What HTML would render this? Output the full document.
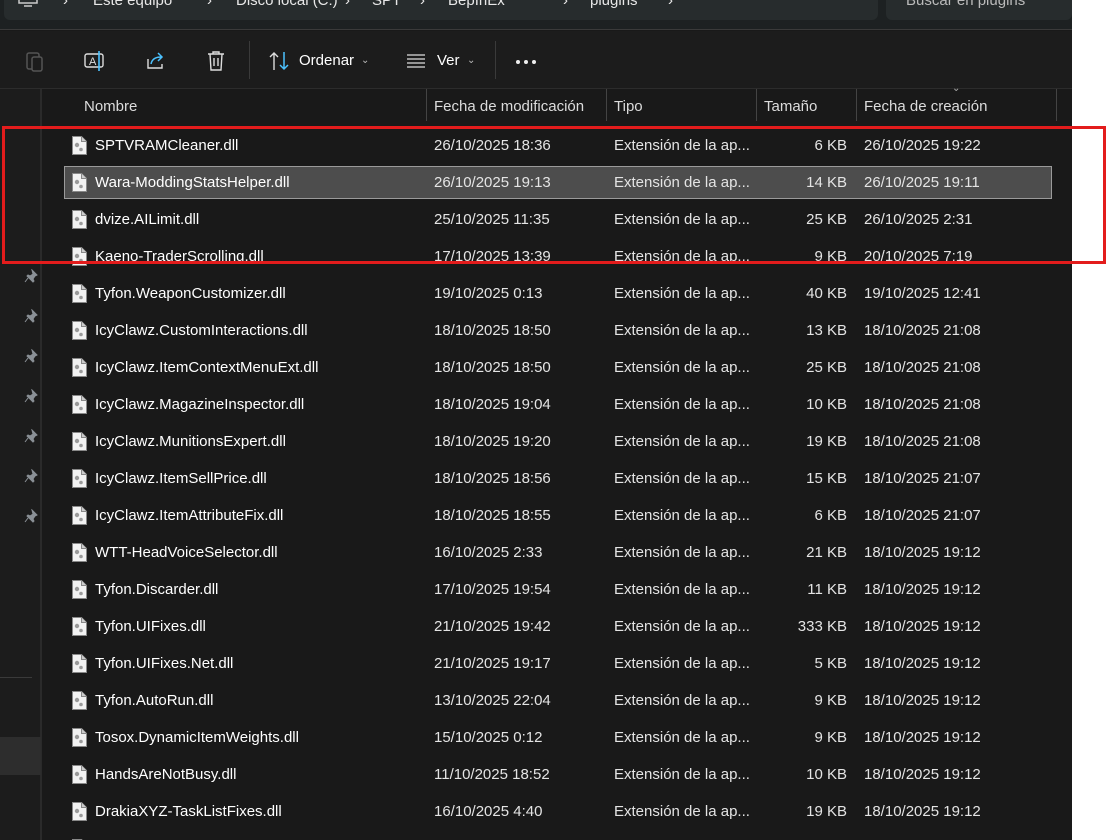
<!DOCTYPE html>
<html><head><meta charset="utf-8"><style>
*{margin:0;padding:0;box-sizing:border-box}
body{width:1108px;height:840px;overflow:hidden;background:#fff;font-family:"Liberation Sans",sans-serif;color:#fff;position:relative}
#app{position:absolute;left:0;top:0;width:1072px;height:840px;background:#191919;overflow:hidden}
#top{position:absolute;left:0;top:0;width:1072px;height:30px;background:#1d2122;border-bottom:1px solid #3a3a3a}
.crumb{position:absolute;top:-12px;height:32px;background:#272c2d;border-radius:6px}
.ct{position:absolute;top:-8px;font-size:15px;color:#e8e8e8;white-space:nowrap}
#tb{position:absolute;top:31px;left:0;width:1072px;height:58px;background:#1c1c1c;border-bottom:1px solid #2c2c2c}
.tl{position:absolute;font-size:15px;color:#fff;top:21px}
.vs{position:absolute;top:10px;width:1px;height:38px;background:#3a3a3a}
#side{position:absolute;left:0;top:89px;width:42px;height:751px;background:#1c1c1c;border-right:2px solid #2a2a2a}
#hdr{position:absolute;top:89px;left:44px;width:1028px;height:34px}
.h{position:absolute;top:9px;font-size:15px;color:#dcdcdc}
.hs{position:absolute;top:0;width:1px;height:32px;background:#444}
.row{position:absolute;left:64px;width:988px;height:33px;font-size:15px;color:#fff}
.row span{position:absolute;top:8px;white-space:nowrap}
.sel{background:#4d4d4d;box-shadow:inset 0 0 0 1px #9a9a9a}
.ic{position:absolute;left:8px;top:7px;width:15px;height:19px}
</style></head><body>
<div id="app">
<div id="top">
 <div class="crumb" style="left:4px;width:874px"></div>
 <div class="crumb" style="left:886px;width:186px"></div>
 <svg style="position:absolute;left:18px;top:-6px" width="22" height="14"><rect x="1" y="0" width="18" height="9" fill="none" stroke="#ccc" stroke-width="1.5"/><line x1="6" y1="12" x2="14" y2="12" stroke="#ccc" stroke-width="1.5"/></svg>
 <div class="ct" style="left:63px">›</div><div class="ct" style="left:93px">Este equipo</div>
 <div class="ct" style="left:207px">›</div><div class="ct" style="left:236px">Disco local (C:)</div>
 <div class="ct" style="left:345px">›</div><div class="ct" style="left:372px">SPT</div>
 <div class="ct" style="left:420px">›</div><div class="ct" style="left:448px">BepInEx</div>
 <div class="ct" style="left:563px">›</div><div class="ct" style="left:590px">plugins</div>
 <div class="ct" style="left:668px">›</div>
 <div class="ct" style="left:906px;color:#bbb">Buscar en plugins</div>
</div>
<div id="tb">
 <svg style="position:absolute;left:25px;top:19px" width="22" height="22"><rect x="2" y="3" width="12" height="16" rx="2" fill="none" stroke="#555" stroke-width="1.5"/><rect x="7" y="7" width="10" height="14" rx="2" fill="#1c1c1c" stroke="#555" stroke-width="1.5"/></svg>
 <svg style="position:absolute;left:84px;top:19px" width="24" height="22"><rect x="1" y="4" width="18" height="13" rx="2" fill="none" stroke="#ddd" stroke-width="1.4"/><text x="5" y="15" font-size="11" fill="#ddd" font-family="Liberation Sans">A</text><line x1="15" y1="1" x2="15" y2="21" stroke="#4cc2ff" stroke-width="1.6"/></svg>
 <svg style="position:absolute;left:145px;top:19px" width="22" height="22"><path d="M3 9v9h14v-4" fill="none" stroke="#ddd" stroke-width="1.4"/><path d="M6 14c1-5 5-7 10-7M13 3l4 4-4 4" fill="none" stroke="#4cc2ff" stroke-width="1.5"/></svg>
 <svg style="position:absolute;left:205px;top:19px" width="22" height="22"><path d="M3 4h16M8 4V2h6v2M5 4l1 16h10l1-16M9 8v8M13 8v8" fill="none" stroke="#ddd" stroke-width="1.4"/></svg>
 <div class="vs" style="left:249px"></div>
 <svg style="position:absolute;left:268px;top:19px" width="24" height="22"><path d="M6 20V3M2 7l4-4 4 4" fill="none" stroke="#ddd" stroke-width="1.4"/><path d="M16 2v17M12 15l4 4 4-4" fill="none" stroke="#4cc2ff" stroke-width="1.5"/></svg>
 <div class="tl" style="left:299px">Ordenar</div><div class="tl" style="left:361px;font-size:10px;top:24px;color:#bbb">⌄</div>
 <svg style="position:absolute;left:406px;top:22px" width="22" height="16"><path d="M1 2h18M1 6h18M1 10h18M1 14h18" stroke="#ddd" stroke-width="1.3"/></svg>
 <div class="tl" style="left:437px">Ver</div><div class="tl" style="left:467px;font-size:10px;top:24px;color:#bbb">⌄</div>
 <div class="vs" style="left:495px"></div>
 <svg style="position:absolute;left:514px;top:28px" width="26" height="6"><circle cx="4" cy="3" r="2" fill="#eee"/><circle cx="12" cy="3" r="2" fill="#eee"/><circle cx="20" cy="3" r="2" fill="#eee"/></svg>
</div>
<div id="side"></div>
<div id="hdr">
 <div class="h" style="left:40px">Nombre</div>
 <div class="hs" style="left:382px"></div><div class="h" style="left:390px">Fecha de modificación</div>
 <div class="hs" style="left:562px"></div><div class="h" style="left:570px">Tipo</div>
 <div class="hs" style="left:712px"></div><div class="h" style="left:720px">Tamaño</div>
 <div class="hs" style="left:812px"></div><div class="h" style="left:820px">Fecha de creación</div>
 <div class="h" style="left:908px;top:-6px;font-size:10px;color:#aaa">⌄</div>
 <div class="hs" style="left:1012px"></div>
</div>
<div id="rows"></div>
</div>
<svg style="position:absolute;left:0;top:0" width="1108" height="840"><rect x="3.5" y="127.5" width="1101" height="135" fill="none" stroke="#e31c1c" stroke-width="3"/></svg>
<script>
var d=[["SPTVRAMCleaner.dll","26/10/2025 18:36","6 KB","26/10/2025 19:22"],
["Wara-ModdingStatsHelper.dll","26/10/2025 19:13","14 KB","26/10/2025 19:11"],
["dvize.AILimit.dll","25/10/2025 11:35","25 KB","26/10/2025 2:31"],
["Kaeno-TraderScrolling.dll","17/10/2025 13:39","9 KB","20/10/2025 7:19"],
["Tyfon.WeaponCustomizer.dll","19/10/2025 0:13","40 KB","19/10/2025 12:41"],
["IcyClawz.CustomInteractions.dll","18/10/2025 18:50","13 KB","18/10/2025 21:08"],
["IcyClawz.ItemContextMenuExt.dll","18/10/2025 18:50","25 KB","18/10/2025 21:08"],
["IcyClawz.MagazineInspector.dll","18/10/2025 19:04","10 KB","18/10/2025 21:08"],
["IcyClawz.MunitionsExpert.dll","18/10/2025 19:20","19 KB","18/10/2025 21:08"],
["IcyClawz.ItemSellPrice.dll","18/10/2025 18:56","15 KB","18/10/2025 21:07"],
["IcyClawz.ItemAttributeFix.dll","18/10/2025 18:55","6 KB","18/10/2025 21:07"],
["WTT-HeadVoiceSelector.dll","16/10/2025 2:33","21 KB","18/10/2025 19:12"],
["Tyfon.Discarder.dll","17/10/2025 19:54","11 KB","18/10/2025 19:12"],
["Tyfon.UIFixes.dll","21/10/2025 19:42","333 KB","18/10/2025 19:12"],
["Tyfon.UIFixes.Net.dll","21/10/2025 19:17","5 KB","18/10/2025 19:12"],
["Tyfon.AutoRun.dll","13/10/2025 22:04","9 KB","18/10/2025 19:12"],
["Tosox.DynamicItemWeights.dll","15/10/2025 0:12","9 KB","18/10/2025 19:12"],
["HandsAreNotBusy.dll","11/10/2025 18:52","10 KB","18/10/2025 19:12"],
["DrakiaXYZ-TaskListFixes.dll","16/10/2025 4:40","19 KB","18/10/2025 19:12"],
["","","",""]];
var ic='<svg class="ic" viewBox="0 0 15 19"><path d="M0.5 0.5h9l5 5v13h-14z" fill="#f2f2f2" stroke="#888"/><path d="M9.5 0.5v5h5" fill="#ccc" stroke="#888"/><circle cx="5" cy="9" r="2.2" fill="#9a9a9a"/><circle cx="9" cy="13.5" r="1.8" fill="#9a9a9a"/></svg>';
var h='';
d.forEach(function(r,i){var y=129+i*37;
h+='<div class="row'+(i==1?' sel':'')+'" style="top:'+y+'px">'+ic+'<span style="left:31px">'+r[0]+'</span>'+(r[0]?'<span style="left:370px;color:#e4e4e4">'+r[1]+'</span><span style="left:550px;color:#e4e4e4">Extensión de la ap...</span><span style="right:205px;color:#e4e4e4">'+r[2]+'</span><span style="left:800px;color:#e4e4e4">'+r[3]+'</span>':'')+'</div>';});
document.getElementById('rows').innerHTML=h;
var s='';[277,317,357,397,437,477,517].forEach(function(y){s+='<svg style="position:absolute;left:24px;top:'+(y-97)+'px" width="14" height="14"><path d="M8 1l5 5-2 1-2 3 1 2-1 1-6-6 1-1 2 1 3-2z M4 9l-3 4" fill="#8a9096" stroke="#8a9096" stroke-width="1"/></svg>';});
s+='<div style="position:absolute;left:0;top:588px;width:32px;height:1px;background:#3a3a3a"></div><div style="position:absolute;left:0;top:648px;width:41px;height:38px;background:#2d2d2d"></div>';
document.getElementById('side').innerHTML=s;
</script>
</body></html>
